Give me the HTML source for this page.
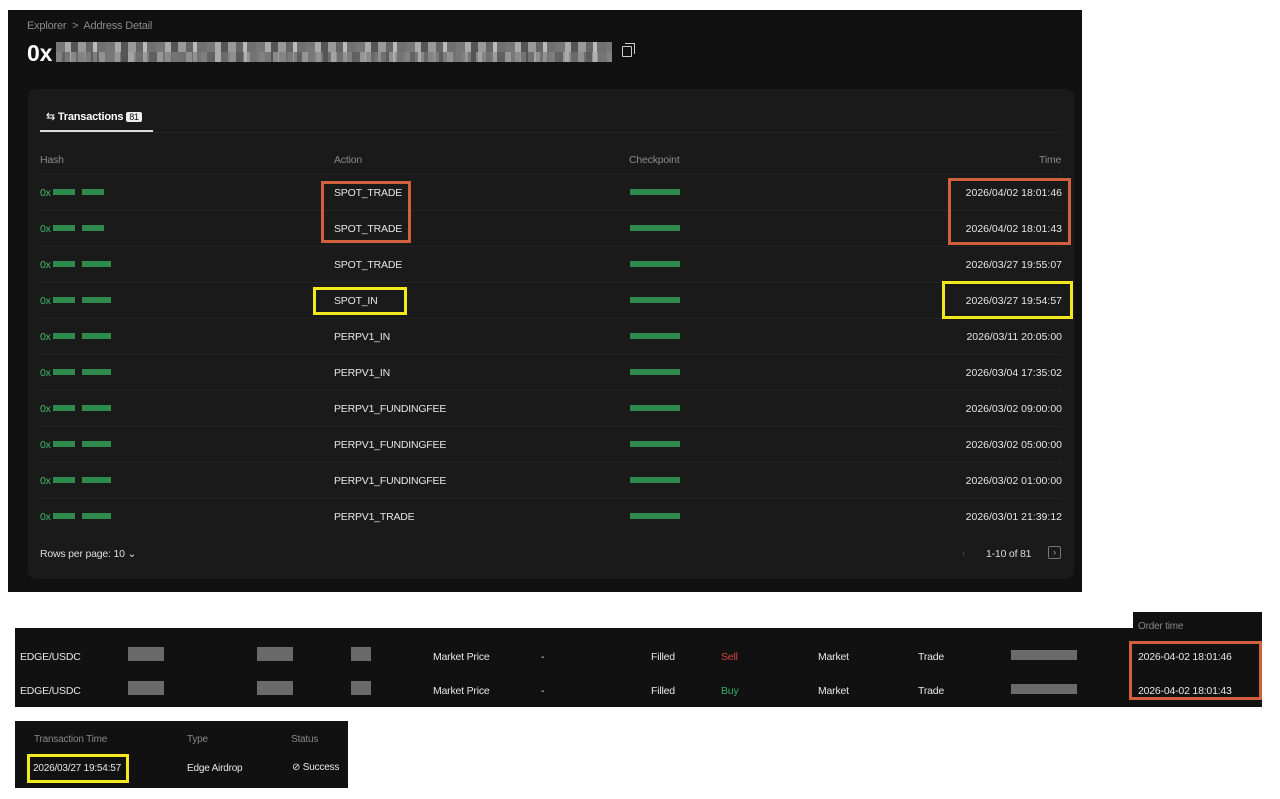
<!DOCTYPE html>
<html><head><meta charset="utf-8"><style>
*{margin:0;padding:0;box-sizing:border-box}
body{width:1280px;height:799px;background:#fff;position:relative;overflow:hidden;font-family:"Liberation Sans",sans-serif;font-size:10.5px;letter-spacing:-0.2px;color:#e6e6e6}
.a{position:absolute;white-space:nowrap}
.g{background:#2f8a4e;position:absolute;height:6px}
.gr{background:#6a6a6a;position:absolute}
.sep{position:absolute;height:1px;background:#232323}
</style></head><body>
<div class="a" style="left:8px;top:10px;width:1074px;height:582px;background:#111"></div>
<div class="a" style="left:27px;top:20px;color:#8a8a8a;font-size:11px">Explorer &nbsp;&gt;&nbsp; Address Detail</div>
<div class="a" style="left:27px;top:40px;color:#fff;font-size:23px;font-weight:bold">0x</div>
<div class="a" style="left:56px;top:42px;width:556px;height:20px;background:repeating-linear-gradient(90deg,#777 0 9px,#aaa 9px 15px,#555 15px 22px,#999 22px 30px,#666 30px 37px,#bbb 37px 41px,#707070 41px 50px);"></div>
<div class="a" style="left:56px;top:52px;width:556px;height:10px;background:repeating-linear-gradient(90deg,#888 0 6px,#555 6px 14px,#aaa 14px 20px,#777 20px 29px);opacity:.6"></div>
<div class="a" style="left:622px;top:46px;width:10px;height:11px;border:1.5px solid #ccc;border-radius:1px"></div>
<div class="a" style="left:625px;top:43px;width:10px;height:11px;border-top:1.5px solid #ccc;border-right:1.5px solid #ccc"></div>
<div class="a" style="left:28px;top:89px;width:1046px;height:490px;background:#1a1a1a;border-radius:8px"></div>
<div class="a" style="left:46px;top:110px;color:#fff;font-size:11px">⇆ <b>Transactions</b> <span style="background:#eee;color:#111;font-size:9px;padding:0 3px;border-radius:2px">81</span></div>
<div class="a" style="left:40px;top:130px;width:113px;height:2px;background:#ddd"></div>
<div class="sep" style="left:40px;top:132px;width:1022px"></div>
<div class="a" style="left:40px;top:154px;color:#8a8a8a">Hash</div>
<div class="a" style="left:334px;top:154px;color:#8a8a8a">Action</div>
<div class="a" style="left:629px;top:154px;color:#8a8a8a">Checkpoint</div>
<div class="a" style="left:1039px;top:154px;color:#8a8a8a">Time</div>
<div id="rows"></div>
<div class="a" style="left:40px;top:548px;color:#ddd">Rows per page: 10 ⌄</div>
<div class="a" style="left:962px;top:547px;color:#555">‹</div>
<div class="a" style="left:986px;top:548px;color:#ddd">1-10 of 81</div>
<div class="a" style="left:1048px;top:546px;width:13px;height:13px;border:1px solid #777;border-radius:2px;color:#aaa;font-size:9px;text-align:center;line-height:11px">›</div>

<div class="a" style="left:15px;top:628px;width:1247px;height:79px;background:#111"></div>
<div class="a" style="left:1133px;top:612px;width:129px;height:95px;background:#111"></div>
<div class="a" style="left:1138px;top:621px;color:#888;font-size:10px">Order time</div>
<div class="a" style="left:20px;top:651px">EDGE/USDC</div>
<div class="a" style="left:20px;top:685px">EDGE/USDC</div>
<div class="gr" style="left:128px;top:647px;width:36px;height:14px"></div>
<div class="gr" style="left:128px;top:681px;width:36px;height:14px"></div>
<div class="gr" style="left:257px;top:647px;width:36px;height:14px"></div>
<div class="gr" style="left:257px;top:681px;width:36px;height:14px"></div>
<div class="gr" style="left:351px;top:647px;width:20px;height:14px"></div>
<div class="gr" style="left:351px;top:681px;width:20px;height:14px"></div>
<div class="a" style="left:433px;top:651px">Market Price</div>
<div class="a" style="left:433px;top:685px">Market Price</div>
<div class="a" style="left:541px;top:651px">-</div>
<div class="a" style="left:541px;top:685px">-</div>
<div class="a" style="left:651px;top:651px">Filled</div>
<div class="a" style="left:651px;top:685px">Filled</div>
<div class="a" style="left:721px;top:651px;color:#d9443f">Sell</div>
<div class="a" style="left:721px;top:685px;color:#2fae63">Buy</div>
<div class="a" style="left:818px;top:651px">Market</div>
<div class="a" style="left:818px;top:685px">Market</div>
<div class="a" style="left:918px;top:651px">Trade</div>
<div class="a" style="left:918px;top:685px">Trade</div>
<div class="gr" style="left:1011px;top:650px;width:66px;height:10px"></div>
<div class="gr" style="left:1011px;top:684px;width:66px;height:10px"></div>
<div class="a" style="left:1138px;top:651px">2026-04-02 18:01:46</div>
<div class="a" style="left:1138px;top:685px">2026-04-02 18:01:43</div>
<div class="a" style="left:1129px;top:641px;width:133px;height:59px;border:3px solid #d0603e"></div>

<div class="a" style="left:15px;top:721px;width:333px;height:67px;background:#111"></div>
<div class="a" style="left:34px;top:734px;color:#888;font-size:10px">Transaction Time</div>
<div class="a" style="left:187px;top:734px;color:#888;font-size:10px">Type</div>
<div class="a" style="left:291px;top:734px;color:#888;font-size:10px">Status</div>
<div class="a" style="left:33px;top:763px;font-size:10px">2026/03/27 19:54:57</div>
<div class="a" style="left:187px;top:763px;font-size:10px">Edge Airdrop</div>
<div class="a" style="left:292px;top:762px;font-size:10px">⊘ Success</div>
<div class="a" style="left:27px;top:754px;width:102px;height:29px;border:3px solid #f2ea1c"></div>

<script>
var R=[["SPOT_TRADE","2026/04/02 18:01:46"],["SPOT_TRADE","2026/04/02 18:01:43"],["SPOT_TRADE","2026/03/27 19:55:07"],["SPOT_IN","2026/03/27 19:54:57"],["PERPV1_IN","2026/03/11 20:05:00"],["PERPV1_IN","2026/03/04 17:35:02"],["PERPV1_FUNDINGFEE","2026/03/02 09:00:00"],["PERPV1_FUNDINGFEE","2026/03/02 05:00:00"],["PERPV1_FUNDINGFEE","2026/03/02 01:00:00"],["PERPV1_TRADE","2026/03/01 21:39:12"]];
var h="";
R.forEach(function(r,i){var y=187+i*36;
h+='<div class="sep" style="left:40px;top:'+(y-13)+'px;width:1022px"></div>';
h+='<div class="a" style="left:40px;top:'+y+'px;color:#3fbf6a">0x</div>';
h+='<div class="g" style="left:53px;top:'+(y+2)+'px;width:22px"></div><div class="g" style="left:82px;top:'+(y+2)+'px;width:'+(i<2?22:29)+'px"></div>';
h+='<div class="a" style="left:334px;top:'+y+'px">'+r[0]+'</div>';
h+='<div class="g" style="left:630px;top:'+(y+2)+'px;width:50px"></div>';
h+='<div class="a" style="right:218px;top:'+y+'px;letter-spacing:0">'+r[1]+'</div>';});
h+='<div class="a" style="left:321px;top:181px;width:90px;height:62px;border:3px solid #d0603e"></div>';
h+='<div class="a" style="left:948px;top:178px;width:123px;height:67px;border:3px solid #d0603e"></div>';
h+='<div class="a" style="left:313px;top:287px;width:94px;height:28px;border:3px solid #f2ea1c"></div>';
h+='<div class="a" style="left:942px;top:281px;width:131px;height:38px;border:3px solid #f2ea1c"></div>';
document.getElementById("rows").innerHTML=h;
</script>
</body></html>
